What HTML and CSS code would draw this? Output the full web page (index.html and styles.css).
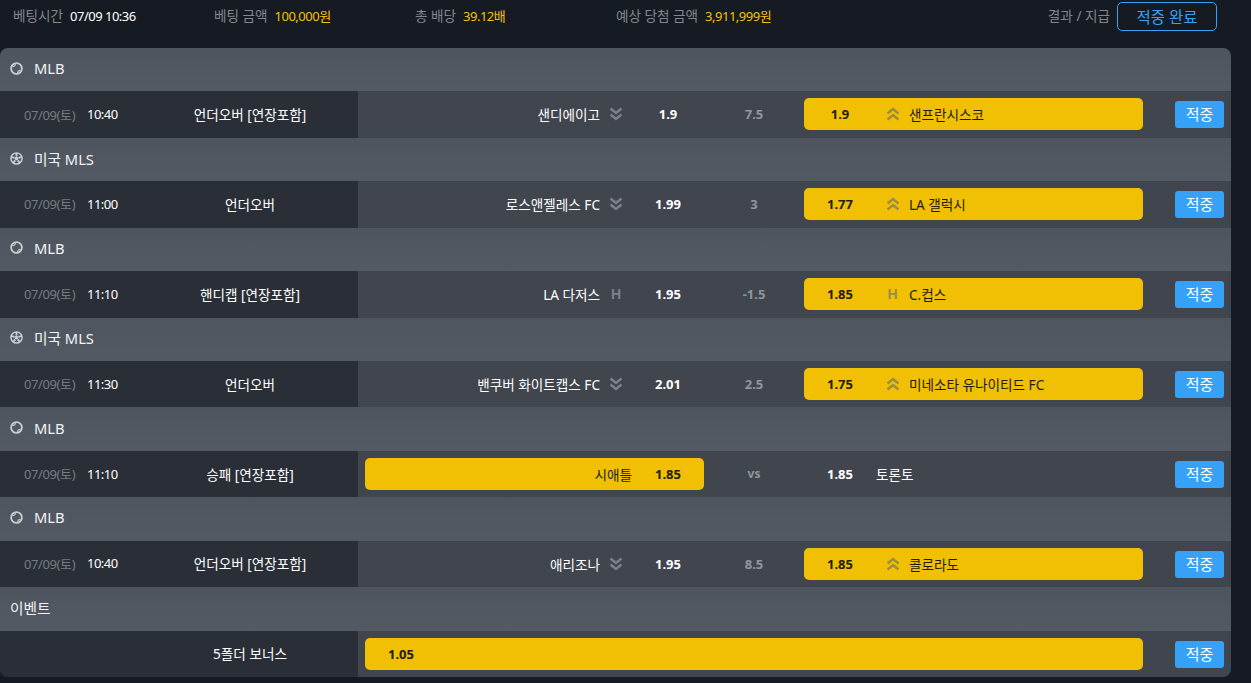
FILE: index.html
```html
<!DOCTYPE html>
<html lang="ko">
<head>
    <meta charset="UTF-8">
    <meta name="viewport" content="width=device-width, initial-scale=1.0">
    <title>베팅 내역</title>
    <link rel="stylesheet" href="styles.css">
</head>
<body>
    <svg class="defs">
        <symbol id="ico-down" viewBox="0 0 14 14"><path d="M1.5 1.5 7 6 12.5 1.5M1.5 7.5 7 12 12.5 7.5" fill="none" stroke="currentColor" stroke-width="2.4"/></symbol>
        <symbol id="ico-up" viewBox="0 0 14 14"><path d="M1.5 6.5 7 2 12.5 6.5M1.5 12.5 7 8 12.5 12.5" fill="none" stroke="currentColor" stroke-width="2.4"/></symbol>
        <symbol id="ico-baseball" viewBox="0 0 14 14">
            <circle cx="7" cy="7" r="5.8" fill="none" stroke="currentColor" stroke-width="2"/>
            <path d="M2.5 4.6C5 5 6 3.8 5.6 1.8M11.5 9.4C9 9 8 10.2 8.4 12.2" fill="none" stroke="currentColor" stroke-width="1.3"/>
        </symbol>
        <symbol id="ico-soccer" viewBox="0 0 14 14">
            <circle cx="7" cy="7" r="6" fill="none" stroke="currentColor" stroke-width="1.6"/>
            <path d="M7 4.6 9.3 6.3 8.4 9H5.6L4.7 6.3Z" fill="currentColor"/>
            <path d="M7 1V4.6M13 5.2 9.3 6.3M10.6 12 8.4 9M3.4 12 5.6 9M1 5.2 4.7 6.3" fill="none" stroke="currentColor" stroke-width="2"/>
        </symbol>
    </svg>

    <div class="summary">
        <div class="summary-item"><span class="label">베팅시간</span><span class="value">07/09 10:36</span></div>
        <div class="summary-item"><span class="label">베팅 금액</span><span class="value gold">100,000원</span></div>
        <div class="summary-item"><span class="label">총 배당</span><span class="value gold">39.12배</span></div>
        <div class="summary-item"><span class="label">예상 당첨 금액</span><span class="value gold">3,911,999원</span></div>
        <div class="summary-result">
            <span class="label">결과 / 지급</span>
            <button class="done-btn">적중 완료</button>
        </div>
    </div>

    <div class="slip">
        <div class="league"><svg class="league-ico"><use href="#ico-baseball"/></svg>MLB</div>
        <div class="match">
            <div class="info"><span class="date">07/09(토)</span><span class="time">10:40</span><span class="market">언더오버 [연장포함]</span></div>
            <div class="bets">
                <div class="side home"><span class="team">샌디에이고</span><span class="mark"><svg class="mark-ico"><use href="#ico-down"/></svg></span><span class="odds">1.9</span></div>
                <div class="line">7.5</div>
                <div class="side away picked"><span class="odds">1.9</span><span class="mark"><svg class="mark-ico"><use href="#ico-up"/></svg></span><span class="team">샌프란시스코</span></div>
            </div>
            <div class="result"><span class="hit">적중</span></div>
        </div>

        <div class="league"><svg class="league-ico"><use href="#ico-soccer"/></svg>미국 MLS</div>
        <div class="match">
            <div class="info"><span class="date">07/09(토)</span><span class="time">11:00</span><span class="market">언더오버</span></div>
            <div class="bets">
                <div class="side home"><span class="team">로스앤젤레스 FC</span><span class="mark"><svg class="mark-ico"><use href="#ico-down"/></svg></span><span class="odds">1.99</span></div>
                <div class="line">3</div>
                <div class="side away picked"><span class="odds">1.77</span><span class="mark"><svg class="mark-ico"><use href="#ico-up"/></svg></span><span class="team">LA 갤럭시</span></div>
            </div>
            <div class="result"><span class="hit">적중</span></div>
        </div>

        <div class="league"><svg class="league-ico"><use href="#ico-baseball"/></svg>MLB</div>
        <div class="match">
            <div class="info"><span class="date">07/09(토)</span><span class="time">11:10</span><span class="market">핸디캡 [연장포함]</span></div>
            <div class="bets">
                <div class="side home"><span class="team">LA 다저스</span><span class="mark handi">H</span><span class="odds">1.95</span></div>
                <div class="line">-1.5</div>
                <div class="side away picked"><span class="odds">1.85</span><span class="mark handi">H</span><span class="team">C.컵스</span></div>
            </div>
            <div class="result"><span class="hit">적중</span></div>
        </div>

        <div class="league"><svg class="league-ico"><use href="#ico-soccer"/></svg>미국 MLS</div>
        <div class="match">
            <div class="info"><span class="date">07/09(토)</span><span class="time">11:30</span><span class="market">언더오버</span></div>
            <div class="bets">
                <div class="side home"><span class="team">밴쿠버 화이트캡스 FC</span><span class="mark"><svg class="mark-ico"><use href="#ico-down"/></svg></span><span class="odds">2.01</span></div>
                <div class="line">2.5</div>
                <div class="side away picked"><span class="odds">1.75</span><span class="mark"><svg class="mark-ico"><use href="#ico-up"/></svg></span><span class="team">미네소타 유나이티드 FC</span></div>
            </div>
            <div class="result"><span class="hit">적중</span></div>
        </div>

        <div class="league"><svg class="league-ico"><use href="#ico-baseball"/></svg>MLB</div>
        <div class="match">
            <div class="info"><span class="date">07/09(토)</span><span class="time">11:10</span><span class="market">승패 [연장포함]</span></div>
            <div class="bets">
                <div class="side home picked"><span class="team">시애틀</span><span class="odds">1.85</span></div>
                <div class="line vs">vs</div>
                <div class="side away"><span class="odds">1.85</span><span class="team">토론토</span></div>
            </div>
            <div class="result"><span class="hit">적중</span></div>
        </div>

        <div class="league"><svg class="league-ico"><use href="#ico-baseball"/></svg>MLB</div>
        <div class="match">
            <div class="info"><span class="date">07/09(토)</span><span class="time">10:40</span><span class="market">언더오버 [연장포함]</span></div>
            <div class="bets">
                <div class="side home"><span class="team">애리조나</span><span class="mark"><svg class="mark-ico"><use href="#ico-down"/></svg></span><span class="odds">1.95</span></div>
                <div class="line">8.5</div>
                <div class="side away picked"><span class="odds">1.85</span><span class="mark"><svg class="mark-ico"><use href="#ico-up"/></svg></span><span class="team">콜로라도</span></div>
            </div>
            <div class="result"><span class="hit">적중</span></div>
        </div>

        <div class="league">이벤트</div>
        <div class="match">
            <div class="info"><span class="market">5폴더 보너스</span></div>
            <div class="bets">
                <div class="side bonus picked"><span class="odds">1.05</span></div>
            </div>
            <div class="result"><span class="hit">적중</span></div>
        </div>
    </div>
</body>
</html>
```

FILE: styles.css
```css
body {
    margin: 0;
    background-color: #161b23;
    color: #fff;
    font-family: "Noto Sans", "Noto Sans CJK KR", sans-serif;
    font-size: 13.6px;
    overflow: hidden;
}
.defs {
    display: none;
}
.summary {
    display: flex;
    align-items: flex-start;
    height: 48px;
    padding: 2px 34px 0 13px;
    box-sizing: border-box;
}
.summary-item {
    display: flex;
    gap: 7px;
    width: 201px;
    line-height: 28px;
}
.label {
    color: #82868d;
}
.value {
    color: #fff;
    font-size: 13px;
    letter-spacing: -0.5px;
}
.gold {
    color: #f3c106;
}
.summary-result {
    display: flex;
    gap: 7px;
    margin-left: auto;
    line-height: 28px;
}
.done-btn {
    width: 100px;
    height: 29px;
    padding: 0 0 1px;
    background: none;
    border: 1px solid #35a2f8;
    border-radius: 5px;
    color: #35a2f8;
    font: inherit;
    font-size: 15.5px;
}
.slip {
    width: 1231px;
    border-radius: 8px;
    overflow: hidden;
}
.league {
    display: flex;
    align-items: center;
    height: 43.44px;
    padding: 0 0 3px 10px;
    box-sizing: border-box;
    background: linear-gradient(#4f555e, #545a63);
    font-size: 14.7px;
    color: #f2f3f4;
}
.league-ico {
    width: 13px;
    height: 13px;
    margin-right: 11px;
    color: #c9ccd0;
}
.match {
    display: flex;
    height: 46.41px;
    background: #40454e;
}
.info {
    display: flex;
    align-items: center;
    width: 358px;
    padding: 0 0 1px 24px;
    box-sizing: border-box;
    background: #2a2f37;
}
.date {
    width: 63px;
    font-size: 13px;
    letter-spacing: -0.4px;
    color: #767b83;
}
.time {
    font-size: 13px;
    letter-spacing: -0.5px;
    color: #fff;
}
.market {
    width: 216px;
    margin-left: auto;
    text-align: center;
    color: #fff;
}
.bets {
    display: flex;
    align-items: flex-start;
    width: 778px;
    margin-left: 7px;
    padding-top: 7px;
}
.side {
    display: flex;
    align-items: center;
    width: 339px;
    height: 32px;
    border-radius: 5px;
}
.home {
    justify-content: flex-end;
}
.bonus {
    width: 778px;
}
.picked {
    background: #f1c005;
    color: #231d06;
}
.odds {
    width: 72px;
    text-align: center;
    font-size: 13px;
    font-weight: 700;
}
.mark {
    display: flex;
    justify-content: center;
    width: 32px;
    color: #7c818a;
}
.picked .mark {
    color: #9b8c3f;
}
.handi {
    font-family: "Liberation Sans", sans-serif;
    font-weight: 700;
    font-size: 14px;
}
.mark-ico {
    width: 14px;
    height: 14px;
}
.away .mark {
    width: 33px;
}
.line {
    width: 100px;
    line-height: 32px;
    text-align: center;
    font-size: 13px;
    font-weight: 700;
    color: #91959c;
}
.vs {
    font-size: 12px;
}
.result {
    display: flex;
    align-items: flex-start;
    flex: 1;
    justify-content: flex-end;
    padding: 10px 7px 0 0;
}
.hit {
    width: 49px;
    height: 27px;
    line-height: 26px;
    text-align: center;
    background: #35a2f8;
    border-radius: 3px;
    font-size: 15px;
}
```
